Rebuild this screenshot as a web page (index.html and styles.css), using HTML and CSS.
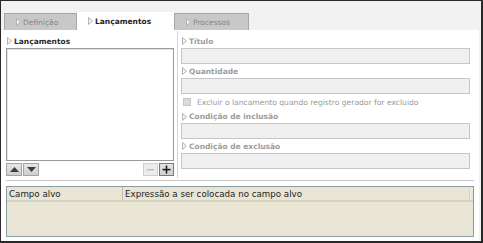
FILE: index.html
```html
<!DOCTYPE html>
<html lang="pt">
<head>
<meta charset="utf-8">
<link rel="stylesheet" href="styles.css">
</head>
<body>
<div class="frame">
  <div class="tabs">
    <div class="tab tab-def"><svg class="tri" width="5" height="8" viewBox="0 0 5 8"><polygon points="0.5,0.5 4.5,4 0.5,7.5" /></svg><span>Definição</span></div>
    <div class="tab tab-active"><svg class="tri" width="5" height="8" viewBox="0 0 5 8"><polygon points="0.5,0.5 4.5,4 0.5,7.5" /></svg><span>Lançamentos</span></div>
    <div class="tab tab-proc"><svg class="tri" width="5" height="8" viewBox="0 0 5 8"><polygon points="0.5,0.5 4.5,4 0.5,7.5" /></svg><span>Processos</span></div>
  </div>
  <div class="panel">
    <div class="top">
      <div class="left">
        <div class="label label-dark"><svg class="tri" width="5" height="8" viewBox="0 0 5 8"><polygon points="0.5,0.5 4.5,4 0.5,7.5" /></svg><span>Lançamentos</span></div>
        <div class="listbox"></div>
        <div class="btnrow">
          <div class="btngroup">
            <div class="btn"><svg width="9" height="5" viewBox="0 0 9 5"><polygon points="0,5 4.5,0 9,5" /></svg></div>
            <div class="btn"><svg width="9" height="5" viewBox="0 0 9 5"><polygon points="0,0 9,0 4.5,5" /></svg></div>
          </div>
          <div class="btngroup">
            <div class="btn btn-off"><svg width="9" height="9" viewBox="0 0 9 9"><rect x="1" y="4" width="7" height="1.4" /></svg></div>
            <div class="btn btn-plus"><svg width="9" height="9" viewBox="0 0 9 9"><rect x="0.5" y="3.8" width="8" height="1.6" /><rect x="3.7" y="0.5" width="1.6" height="8" /></svg></div>
          </div>
        </div>
      </div>
      <div class="right">
        <div class="label"><svg class="tri" width="5" height="8" viewBox="0 0 5 8"><polygon points="0.5,0.5 4.5,4 0.5,7.5" /></svg><span>Título</span></div>
        <div class="input"></div>
        <div class="label"><svg class="tri" width="5" height="8" viewBox="0 0 5 8"><polygon points="0.5,0.5 4.5,4 0.5,7.5" /></svg><span>Quantidade</span></div>
        <div class="input"></div>
        <div class="check"><span class="box"></span><span>Excluir o lancamento quando registro gerador for excluido</span></div>
        <div class="label label-short"><svg class="tri" width="5" height="8" viewBox="0 0 5 8"><polygon points="0.5,0.5 4.5,4 0.5,7.5" /></svg><span>Condição de inclusão</span></div>
        <div class="input"></div>
        <div class="label"><svg class="tri" width="5" height="8" viewBox="0 0 5 8"><polygon points="0.5,0.5 4.5,4 0.5,7.5" /></svg><span>Condição de exclusão</span></div>
        <div class="input"></div>
      </div>
    </div>
    <div class="sep"></div>
    <div class="grid">
      <div class="ghead">
        <div class="gcol gcol1">Campo alvo</div>
        <div class="gcol gcol2">Expressão a ser colocada no campo alvo</div>
        <div class="gmark"></div>
      </div>
    </div>
  </div>
</div>
</body>
</html>
```
FILE: styles.css
```css
* { box-sizing: border-box; }
html, body { margin: 0; padding: 0; }
body {
  font-family: "DejaVu Sans", Verdana, sans-serif;
  font-size: 7.5px;
  color: #333;
  background: #fff;
}
.frame {
  width: 483px;
  height: 243px;
  border: 1px solid #2a2a2a;
  border-right-width: 2px;
  border-bottom-width: 2px;
  background: #f2f2f2;
  display: flex;
  flex-direction: column;
}
.tabs {
  height: 29px;
  display: flex;
  align-items: flex-end;
  padding-left: 3px;
}
.tab {
  height: 17px;
  display: flex;
  align-items: center;
  padding-left: 11px;
  background: #c8c8c8;
  border: 1px solid #a8a8a8;
  border-bottom: none;
  color: #858585;
}
.tab-def { width: 73px; }
.tab-proc { width: 75px; }
.tab-active {
  width: 97px;
  height: 18px;
  background: #fff;
  border: none;
  color: #222;
  font-weight: bold;
  padding-left: 11px;
}
.tri { flex: none; margin-right: 2px; }
.tri polygon { fill: #f4f4f4; stroke: #b4b4b4; stroke-width: 1; }
.panel {
  flex: 1;
  background: #fff;
  margin-right: 2px;
  display: flex;
  flex-direction: column;
}
.top {
  display: flex;
  height: 148px;
}
.left {
  width: 176px;
  padding: 4px 0 0 5px;
}
.label {
  height: 14px;
  display: flex;
  align-items: center;
  font-weight: bold;
  color: #9c9c9c;
  padding-left: 1px;
}
.label-dark { color: #2a2a2a; }
.label-short { height: 13px; }
.listbox {
  width: 168px;
  height: 113px;
  border: 1px solid #9a9a9a;
  box-shadow: inset 1px 1px 0 #e2e2e2;
  background: #fff;
}
.btnrow {
  width: 168px;
  margin-top: 2px;
  display: flex;
  justify-content: space-between;
}
.btngroup { display: flex; gap: 1px; }
.btn {
  width: 16px;
  height: 13px;
  border: 1px solid #a4a4a4;
  background: linear-gradient(#e6e6e6, #cdcdcd);
  display: flex;
  align-items: center;
  justify-content: center;
}
.btn polygon { fill: #3c3c3c; }
.btn-off { width: 15px; background: #ececec; border-color: #cfcfcf; }
.btn-off rect { fill: #b8b8b8; }
.btn-plus { width: 15px; border-color: #7a7a7a; background: linear-gradient(#e4e4e4, #cfcfcf); }
.btn-plus rect { fill: #1e1e1e; }
.right {
  flex: none;
  width: 293px;
  margin-top: 1px;
  border-left: 1px solid #d6d6d6;
  padding: 3px 0 0 3px;
}
.input {
  width: 289px;
  height: 16px;
  background: #f0f0f0;
  border: 1px solid #c6c6c6;
}
.check {
  height: 16px;
  display: flex;
  align-items: center;
  padding-left: 2px;
  font-size: 7.6px;
  color: #9a9a9a;
}
.box {
  width: 8px;
  height: 8px;
  background: #dcdcdc;
  border: 1px solid #c4c4c4;
  margin-right: 6px;
}
.sep {
  margin: 2px 5px 0 5px;
  height: 1px;
  background: #c6c6c6;
}
.grid {
  margin: 5px 5px 0 5px;
  height: 51px;
  border: 1px solid #8c9ca4;
  background: #e8e5d5;
}
.ghead {
  height: 15px;
  display: flex;
  align-items: stretch;
  border-bottom: 2px solid #d6d2bf;
  font-size: 8.7px;
  color: #222;
  position: relative;
}
.gcol { display: flex; align-items: center; padding-left: 2px; }
.gcol1 { width: 116px; border-right: 1px solid #c4c0ac; }
.gmark {
  position: absolute;
  right: 2px;
  top: 3px;
  width: 2px;
  height: 9px;
  background: #f4f2ea;
  border-left: 1px solid #d0ccb8;
}
```
